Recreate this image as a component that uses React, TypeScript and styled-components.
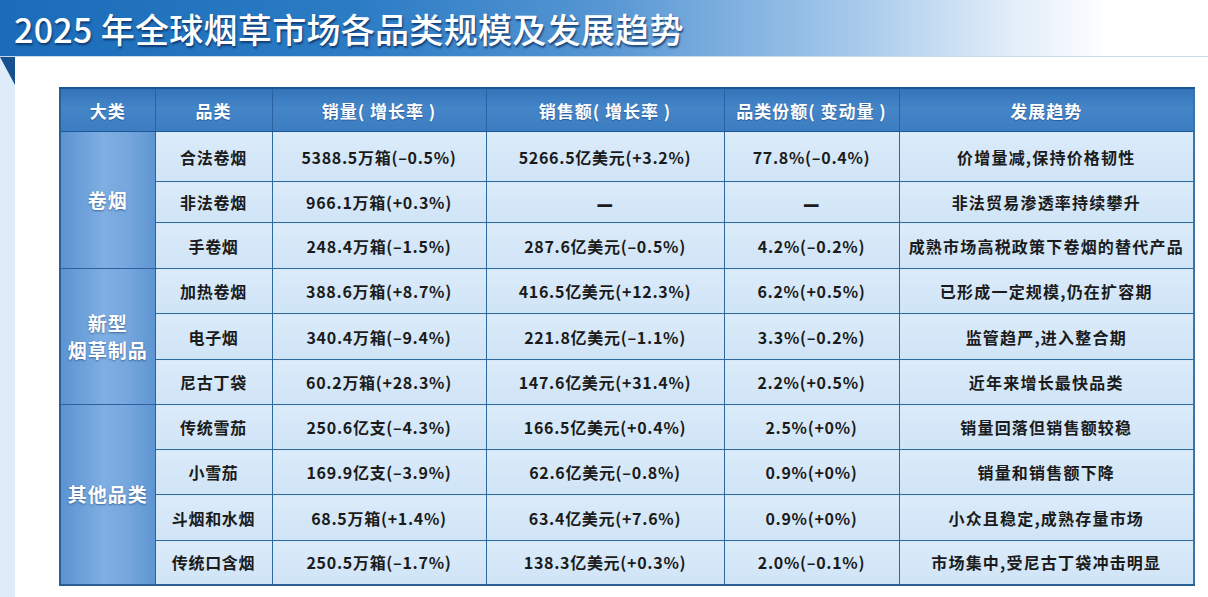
import { createGlobalStyle, styled } from "styled-components";

const GlobalStyle = createGlobalStyle`
  html, body {
    margin: 0;
    padding: 0;
    background: #ffffff;
  }
  body {
    font-family: "Noto Sans CJK SC", "Noto Sans", sans-serif;
  }
`;

const Page = styled.div`
  width: 1208px;
  height: 597px;
  display: flex;
  flex-direction: column;
  overflow: hidden;
`;

const TitleBar = styled.div`
  height: 56px;
  display: flex;
  align-items: center;
  padding-left: 14px;
  background: linear-gradient(
    to right,
    #1a6cb9 0%,
    #2c7cc5 30%,
    #5696d3 50%,
    #a3c7ea 70%,
    #e2eef9 84%,
    #ffffff 92%
  );
  border-bottom: 1px solid #c9d9ea;
`;

const Title = styled.h1`
  margin: 0;
  font-size: 34px;
  font-weight: 500;
  color: #ffffff;
  letter-spacing: 0.3px;
  text-shadow: 1px 2px 2px rgba(10, 40, 90, 0.75);
`;

const Body = styled.div`
  flex: 1;
  display: flex;
`;

const SideStrip = styled.div`
  width: 15px;
  background: #deecf9;
  &::before {
    content: "";
    display: block;
    width: 0;
    height: 0;
    border-top: 28px solid #17508f;
    border-left: 15px solid transparent;
  }
`;

const Card = styled.div`
  flex: 1;
  background: #ffffff;
  padding: 30px 15px 0 44px;
`;

const Table = styled.table`
  width: 1134px;
  border-collapse: collapse;
  table-layout: fixed;
  border-bottom: 2px solid #2a5f93;
  border-left: 2px solid #2a5f93;
  border-right: 2px solid #3a73a8;
`;

const HeadCell = styled.th`
  height: 42px;
  padding: 0;
  font-size: 17px;
  font-weight: 700;
  letter-spacing: 1px;
  color: #ffffff;
  text-align: center;
  background: linear-gradient(to bottom, #3373b8, #4485c8 45%, #3c7cc0);
  border-top: 2px solid #1b5594;
  border-left: 1.5px solid #2a62a0;
  border-right: 1.5px solid #2a62a0;
  border-bottom: 1.5px solid #1f5a96;
  text-shadow: 0 1px 1px rgba(10, 40, 90, 0.4);
`;

const GroupCell = styled.td`
  padding: 0;
  font-size: 19px;
  font-weight: 700;
  line-height: 1.4;
  letter-spacing: 1px;
  color: #ffffff;
  text-align: center;
  background: linear-gradient(to right, #5b92d1, #7eaee2 45%, #76a7dd 70%, #5e95d2);
  border: 1.5px solid #2c629b;
  text-shadow: 0 1px 2px rgba(20, 50, 100, 0.55);
`;

const Cell = styled.td<{ $wide?: boolean }>`
  padding: 0;
  font-size: 16px;
  font-weight: 700;
  letter-spacing: ${(p) => (p.$wide ? "1.2px" : "0.7px")};
  color: #1b1b1b;
  text-align: center;
  white-space: nowrap;
  background: linear-gradient(to bottom, #dbebfa, #cfe4f6);
  border: 1.5px solid #2f6a9f;
`;

const Dash = styled.span`
  display: inline-block;
  font-size: 18px;
  font-weight: 900;
  transform: scaleY(1.4);
`;

const Row = styled.tr<{ $h: number }>`
  height: ${(p) => p.$h}px;
`;

const columns = [
  { title: "大类", width: 95 },
  { title: "品类", width: 117 },
  { title: "销量( 增长率 )", width: 214 },
  { title: "销售额( 增长率 )", width: 238 },
  { title: "品类份额( 变动量 )", width: 175 },
  { title: "发展趋势", width: 295 },
];

type Item = {
  name: string;
  volume: string;
  sales: string;
  share: string;
  trend: string;
  h: number;
};

type Group = { label: string[]; items: Item[] };

const groups: Group[] = [
  {
    label: ["卷烟"],
    items: [
      { name: "合法卷烟", volume: "5388.5万箱(–0.5%)", sales: "5266.5亿美元(+3.2%)", share: "77.8%(–0.4%)", trend: "价增量减,保持价格韧性", h: 50 },
      { name: "非法卷烟", volume: "966.1万箱(+0.3%)", sales: "—", share: "—", trend: "非法贸易渗透率持续攀升", h: 41 },
      { name: "手卷烟", volume: "248.4万箱(–1.5%)", sales: "287.6亿美元(–0.5%)", share: "4.2%(–0.2%)", trend: "成熟市场高税政策下卷烟的替代产品", h: 46 },
    ],
  },
  {
    label: ["新型", "烟草制品"],
    items: [
      { name: "加热卷烟", volume: "388.6万箱(+8.7%)", sales: "416.5亿美元(+12.3%)", share: "6.2%(+0.5%)", trend: "已形成一定规模,仍在扩容期", h: 45 },
      { name: "电子烟", volume: "340.4万箱(–9.4%)", sales: "221.8亿美元(–1.1%)", share: "3.3%(–0.2%)", trend: "监管趋严,进入整合期", h: 46 },
      { name: "尼古丁袋", volume: "60.2万箱(+28.3%)", sales: "147.6亿美元(+31.4%)", share: "2.2%(+0.5%)", trend: "近年来增长最快品类", h: 45 },
    ],
  },
  {
    label: ["其他品类"],
    items: [
      { name: "传统雪茄", volume: "250.6亿支(–4.3%)", sales: "166.5亿美元(+0.4%)", share: "2.5%(+0%)", trend: "销量回落但销售额较稳", h: 45 },
      { name: "小雪茄", volume: "169.9亿支(–3.9%)", sales: "62.6亿美元(–0.8%)", share: "0.9%(+0%)", trend: "销量和销售额下降", h: 45 },
      { name: "斗烟和水烟", volume: "68.5万箱(+1.4%)", sales: "63.4亿美元(+7.6%)", share: "0.9%(+0%)", trend: "小众且稳定,成熟存量市场", h: 46 },
      { name: "传统口含烟", volume: "250.5万箱(–1.7%)", sales: "138.3亿美元(+0.3%)", share: "2.0%(–0.1%)", trend: "市场集中,受尼古丁袋冲击明显", h: 44 },
    ],
  },
];

const value = (v: string) => (v === "—" ? <Dash>{v}</Dash> : v);

export default function App() {
  return (
    <Page>
      <GlobalStyle />
      <TitleBar>
        <Title>2025 年全球烟草市场各品类规模及发展趋势</Title>
      </TitleBar>
      <Body>
        <SideStrip />
        <Card>
          <Table>
            <colgroup>
              {columns.map((c) => (
                <col key={c.title} style={{ width: c.width }} />
              ))}
            </colgroup>
            <thead>
              <tr>
                {columns.map((c) => (
                  <HeadCell key={c.title}>{c.title}</HeadCell>
                ))}
              </tr>
            </thead>
            <tbody>
              {groups.map((g) =>
                g.items.map((it, i) => (
                  <Row key={it.name} $h={it.h}>
                    {i === 0 && (
                      <GroupCell rowSpan={g.items.length}>
                        {g.label.map((l) => (
                          <div key={l}>{l}</div>
                        ))}
                      </GroupCell>
                    )}
                    <Cell>{it.name}</Cell>
                    <Cell>{it.volume}</Cell>
                    <Cell>{value(it.sales)}</Cell>
                    <Cell>{value(it.share)}</Cell>
                    <Cell $wide>{it.trend}</Cell>
                  </Row>
                ))
              )}
            </tbody>
          </Table>
        </Card>
      </Body>
    </Page>
  );
}
